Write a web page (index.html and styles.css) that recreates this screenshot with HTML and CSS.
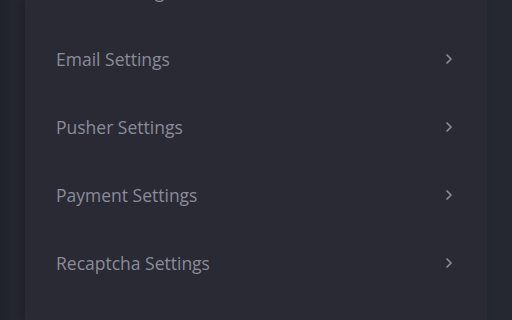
FILE: index.html
```html
<!DOCTYPE html>
<html lang="en">
<head>
    <meta charset="UTF-8">
    <meta name="viewport" content="width=device-width, initial-scale=1.0">
    <title>Settings</title>
    <link rel="stylesheet" href="styles.css">
</head>
<body>

    <div class="page">
        <div class="card">
            <ul class="settings-list">
                <li class="settings-item">
                    <span>Social Settings</span>
                    <svg class="chevron" width="8" height="12" viewBox="0 0 8 12"><path d="M1.5 1.5 L6 6 L1.5 10.5" fill="none" stroke="currentColor" stroke-width="1.6"/></svg>
                </li>
                <li class="settings-item">
                    <span>Email Settings</span>
                    <svg class="chevron" width="8" height="12" viewBox="0 0 8 12"><path d="M1.5 1.5 L6 6 L1.5 10.5" fill="none" stroke="currentColor" stroke-width="1.6"/></svg>
                </li>
                <li class="settings-item">
                    <span>Pusher Settings</span>
                    <svg class="chevron" width="8" height="12" viewBox="0 0 8 12"><path d="M1.5 1.5 L6 6 L1.5 10.5" fill="none" stroke="currentColor" stroke-width="1.6"/></svg>
                </li>
                <li class="settings-item">
                    <span>Payment Settings</span>
                    <svg class="chevron" width="8" height="12" viewBox="0 0 8 12"><path d="M1.5 1.5 L6 6 L1.5 10.5" fill="none" stroke="currentColor" stroke-width="1.6"/></svg>
                </li>
                <li class="settings-item">
                    <span>Recaptcha Settings</span>
                    <svg class="chevron" width="8" height="12" viewBox="0 0 8 12"><path d="M1.5 1.5 L6 6 L1.5 10.5" fill="none" stroke="currentColor" stroke-width="1.6"/></svg>
                </li>
            </ul>
        </div>
    </div>

</body>
</html>
```

FILE: styles.css
```css
html, body {
    margin: 0;
    height: 100%;
    overflow: hidden;
}
body {
    font-family: "Open Sans", "Liberation Sans", sans-serif;
    background-color: #1f2129;
}
.page {
    height: 100%;
    padding: 0 25px 0 12px;
    background: linear-gradient(to right, #1f2129 0, #252731 13px);
}
.card {
    display: flow-root;
    height: 100%;
    margin-left: 13px;
    background: #2a2a34;
    box-shadow: -6px 0 10px rgba(0, 0, 0, 0.15);
}
.settings-list {
    list-style: none;
    margin: -43px 0 0 0;
    padding: 0;
}
.settings-item {
    height: 68px;
    display: flex;
    align-items: center;
    justify-content: space-between;
    padding: 0 34px 0 31px;
    font-size: 17.5px;
    color: #8b8c9a;
}
.chevron {
    color: #8b8c9a;
}
```
